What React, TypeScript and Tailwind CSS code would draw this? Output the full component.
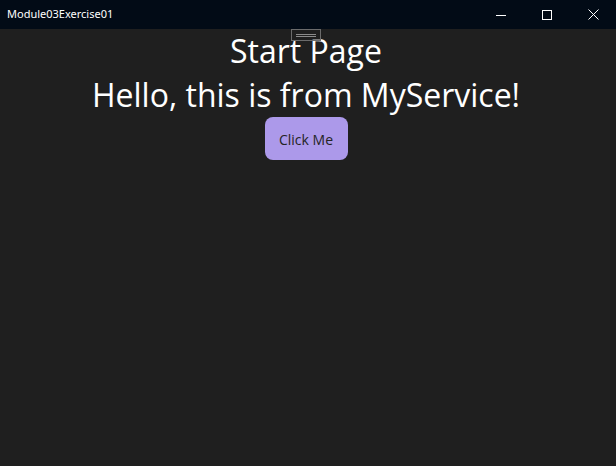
import React from "react";

export default function App() {
  return (
    <div className="w-[616px] h-[466px] bg-[#1f1f1f] flex flex-col overflow-hidden relative" style={{ fontFamily: '"Open Sans", sans-serif' }}>
      <div className="h-[29px] bg-[#020b16] flex items-center shrink-0">
        <div className="pl-[7px] text-[11px] text-white flex-1" style={{ fontFamily: '"Noto Sans", "Open Sans", sans-serif' }}>Module03Exercise01</div>
        <div className="w-[46px] h-[29px] flex items-center justify-center">
          <svg width="10" height="10" viewBox="0 0 10 10"><path d="M0 5.5h10" stroke="white" strokeWidth="1" /></svg>
        </div>
        <div className="w-[46px] h-[29px] flex items-center justify-center">
          <svg width="10" height="10" viewBox="0 0 10 10"><rect x="0.5" y="0.5" width="9" height="9" fill="none" stroke="white" strokeWidth="1" /></svg>
        </div>
        <div className="w-[46px] h-[29px] flex items-center justify-center">
          <svg width="11" height="11" viewBox="0 0 11 11"><path d="M0.5 0.5l10 10M10.5 0.5l-10 10" stroke="white" strokeWidth="1" /></svg>
        </div>
      </div>
      <div className="flex flex-col items-center text-white pr-[4px]">
        <div className="text-[32px] leading-[44px]">Start Page</div>
        <div className="text-[32px] leading-[44px]">Hello, this is from MyService!</div>
        <button className="h-[43px] w-[83px] pt-[1px] rounded-[8px] bg-[#ac99ea] text-[#242424] text-[14px]">Click Me</button>
      </div>
      <div className="absolute left-[291px] top-[29px] w-[30px] h-[12px] border border-[#6b6b6b] bg-[#1f1f1f]/60 flex flex-col items-center justify-center gap-[1px]">
        <div className="w-[20px] h-[1px] bg-[#8a8a8a]" />
        <div className="w-[20px] h-[1px] bg-[#8a8a8a]" />
      </div>
    </div>
  );
}
